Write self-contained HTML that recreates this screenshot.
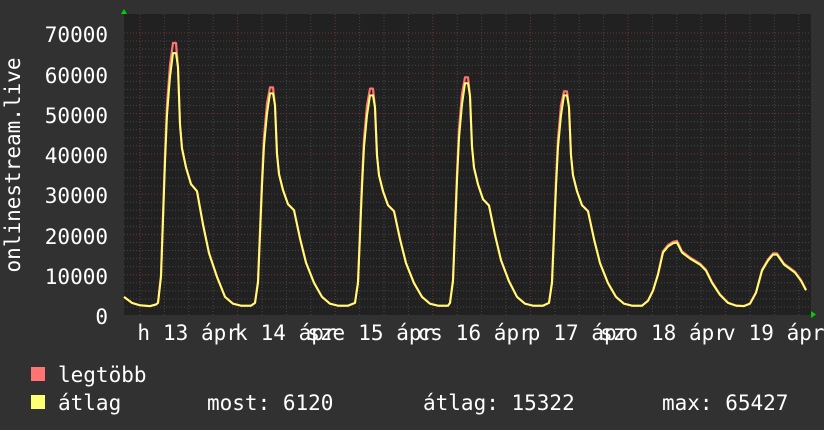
<!DOCTYPE html><html><head><meta charset="utf-8"><style>
html,body{margin:0;padding:0;background:#313131;}
svg{display:block;font-family:"DejaVu Sans Mono","Liberation Mono",monospace;}
</style></head><body>
<svg id="g" width="824" height="430" xmlns="http://www.w3.org/2000/svg">
<rect width="824" height="430" fill="#313131"/>
<rect x="124" y="14" width="687" height="301" fill="#212121"/>
<g id="grid"></g>
<path id="red" fill="none" stroke="#ff7373" stroke-width="2.2" stroke-linejoin="round"/>
<path id="yel" fill="none" stroke="#ffff73" stroke-width="2" stroke-linejoin="round"/>
<polygon points="121,14 124,9 127,14" fill="#00d000"/>
<polygon points="811,311 816,314.5 811,318" fill="#00d000"/>
<g fill="#ffffff" font-size="21">
<g text-anchor="end">
<text x="108" y="42">70000</text><text x="108" y="83">60000</text><text x="108" y="123">50000</text>
<text x="108" y="163">40000</text><text x="108" y="203">30000</text><text x="108" y="244">20000</text>
<text x="108" y="284">10000</text><text x="108" y="324">0</text>
</g>
<text transform="translate(20,165) rotate(-90)" text-anchor="middle">onlinestream.live</text>
<g id="xl"></g>
<text x="58" y="382">legtöbb</text>
<text x="58" y="410">átlag</text>
<text x="207" y="410">most: 6120</text>
<text x="423" y="410">átlag: 15322</text>
<text x="662" y="410">max: 65427</text>
</g>
<rect x="31" y="367" width="14" height="14" fill="#ff7373"/>
<rect x="31" y="395" width="14" height="14" fill="#ffff73"/>
</svg>
<script>
var NS="http://www.w3.org/2000/svg";
function el(n,a,p,t){var e=document.createElementNS(NS,n);for(var k in a)e.setAttribute(k,a[k]);if(t)e.textContent=t;p.appendChild(e);return e;}
var g=document.getElementById('grid');
function Y(v){return 315-v*0.004029;}
for(var v=2000;v<=70000;v+=2000){var maj=v%10000==0;el('line',{x1:124,x2:811,y1:Y(v),y2:Y(v),stroke:maj?'#6e3434':'#454545','stroke-dasharray':'1,2','stroke-width':1},g);}
for(var x=140-97.6;x<811;x+=24.4){if(x<124)continue;var m=Math.abs(((x-140)/97.6)-Math.round((x-140)/97.6))<0.01;el('line',{x1:x,x2:x,y1:14,y2:315,stroke:m?'#6e3434':'#454545','stroke-dasharray':'1,2','stroke-width':1},g);}
var xl=document.getElementById('xl');
var wd=['h','k','sze','cs','p','szo','v'];
for(var i=0;i<7;i++){var d=163+97.6*i;el('text',{x:d-13,y:340,'text-anchor':'end'},xl,wd[i]);el('text',{x:d,y:340},xl,String(13+i));el('text',{x:d+38,y:340},xl,'ápr');}
var peaks=[[175,65000,67500],[272,55000,56500],[372,54500,56200],[467,57500,59000],[566,54500,55500]];
var pat=[[-17,3000],[-14,8000],[-12,20000],[-10,32000],[-8,42000],[-5,50000],[-2,-1],[1,-1],[3,52000],[5,40000],[7,35000],[11,31000],[16,27500],[22,26000],[28,19000],[34,13000],[42,8000],[50,4500],[58,2800],[66,2300],[76,2300]];
function build(isMax){var pts=[[124,4500],[132,3000],[140,2400],[150,2200],[156,2600]];
peaks.forEach(function(p){var P=isMax?p[2]:p[1];pat.forEach(function(q){var v;if(q[1]<0)v=P;else if(q[1]<5000)v=q[1];else{v=q[1]*p[1]/55000;if(isMax&&q[0]<0)v*=1.05;}pts.push([p[0]+q[0],v]);});});
var tail=[[648,3500],[653,6000],[658,10000],[663,15500],[668,17000],[673,17800],[677,18000],[682,15500],[690,14000],[700,12500],[706,11000],[712,8000],[720,5000],[728,3000],[736,2300],[744,2200],[750,2800],[756,5500],[762,11000],[768,13500],[773,15000],[777,15000],[784,12500],[795,10500],[801,8500],[806,6120]];
tail.forEach(function(t){pts.push([t[0],isMax?t[1]*1.02:t[1]]);});
return 'M'+pts.map(function(p){return p[0].toFixed(1)+','+Y(p[1]).toFixed(1);}).join(' L');}
document.getElementById('red').setAttribute('d',build(true));
document.getElementById('yel').setAttribute('d',build(false));
</script>
</body></html>
